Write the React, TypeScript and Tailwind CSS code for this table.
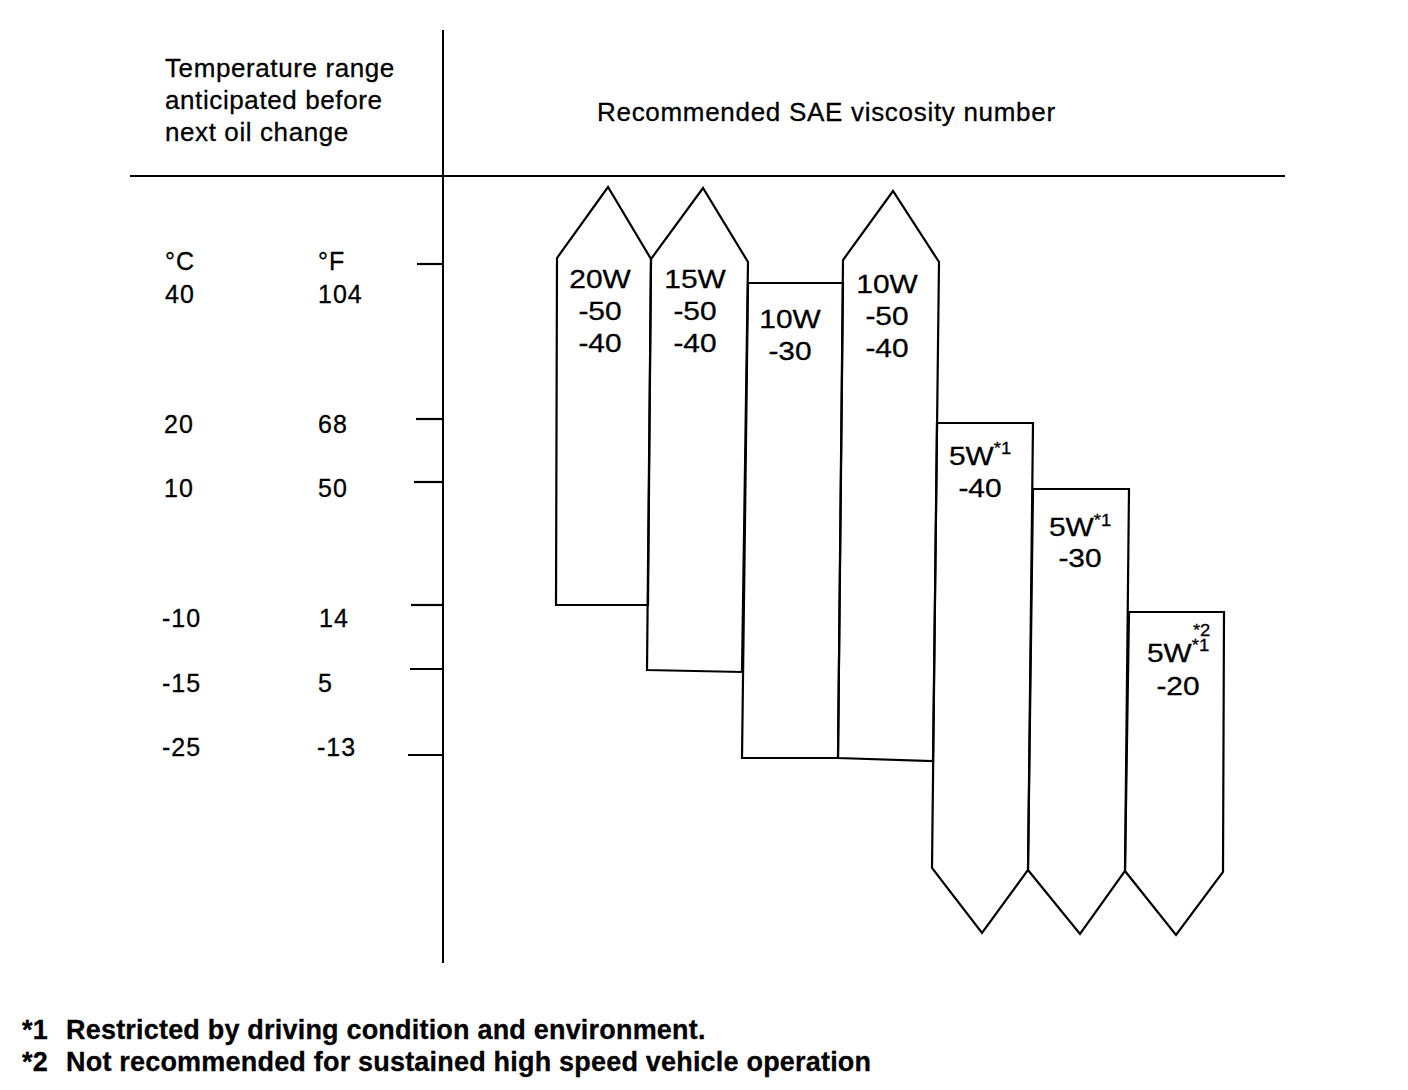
import React from "react";

const font = { fontFamily: '"Liberation Sans", Arial, sans-serif' };

function Sup({ children }: { children: React.ReactNode }) {
  return <span className="relative top-[1px] align-top text-[16px] leading-none">{children}</span>;
}

export default function App() {
  return (
    <div
      className="flex h-[1090px] w-[1408px] flex-col bg-white pt-[30px] text-black [-webkit-text-stroke:0.3px_#000]"
      style={font}
    >
      {/* header row */}
      <div className="ml-[130px] flex h-[147px] shrink-0">
        <div className="w-[314px] border-b-2 border-r-2 border-black pl-[35px] pt-[22px] text-[26px] leading-[32px] tracking-[0.6px]">
          <div>Temperature range</div>
          <div>anticipated before</div>
          <div>next oil change</div>
        </div>
        <div className="w-[841px] border-b-2 border-black pl-[153px] pt-[66px] text-[26px] leading-[32px] tracking-[0.7px]">
          Recommended SAE viscosity number
        </div>
      </div>

      {/* chart body */}
      <div className="ml-[130px] flex h-[786px] shrink-0">
        {/* temperature axis */}
        <div className="relative h-full w-[314px] border-r-2 border-black text-[25px] leading-[32px] tracking-[1px]">
          <svg className="absolute inset-0" width="314" height="786" viewBox="130 177 314 786" fill="none" stroke="#000" strokeWidth="2.2">
            <line x1="417" y1="264" x2="443" y2="264" />
            <line x1="416" y1="419" x2="443" y2="419" />
            <line x1="414" y1="482" x2="443" y2="482" />
            <line x1="411" y1="605" x2="443" y2="605" />
            <line x1="410" y1="669" x2="443" y2="669" />
            <line x1="408" y1="755" x2="443" y2="755" />
          </svg>
          <div className="absolute left-[35px] top-[68px] leading-[33px]">
            <div>°C</div>
            <div>40</div>
          </div>
          <div className="absolute left-[188px] top-[68px] leading-[33px]">
            <div>°F</div>
            <div>104</div>
          </div>
          <div className="absolute left-[34px] top-[231px]">20</div>
          <div className="absolute left-[188px] top-[231px]">68</div>
          <div className="absolute left-[34px] top-[295px]">10</div>
          <div className="absolute left-[188px] top-[295px]">50</div>
          <div className="absolute left-[32px] top-[425px]">-10</div>
          <div className="absolute left-[189px] top-[425px]">14</div>
          <div className="absolute left-[32px] top-[490px]">-15</div>
          <div className="absolute left-[188px] top-[490px]">5</div>
          <div className="absolute left-[32px] top-[554px]">-25</div>
          <div className="absolute left-[187px] top-[554px]">-13</div>
        </div>

        {/* viscosity chart */}
        <div className="relative h-full w-[841px] text-center text-[26px] leading-[32px]">
          <svg className="absolute inset-0" width="841" height="786" viewBox="444 177 841 786" fill="none" stroke="#000" strokeWidth="2.2">
            <polygon points="556,605 557,258 608,187 651,259 648,605" />
            <polygon points="647,670 651,259 703,188 748,262 742,672" />
            <polygon points="742,758 748,283 843,283 838,758" />
            <polygon points="838,758 843,260 893,191 939,262 933,761" />
            <polygon points="937,423 1033,423 1028,870 982,933 932,868" />
            <polygon points="1033,489 1129,489 1125,871 1080,934 1028,870" />
            <polygon points="1129,612 1224,612 1223,872 1176,935 1125,871" />
          </svg>
          <div className="absolute left-[96px] top-[86px] w-[120px] scale-x-[1.15]">
            <div>20W</div>
            <div>-50</div>
            <div>-40</div>
          </div>
          <div className="absolute left-[191px] top-[86px] w-[120px] scale-x-[1.15]">
            <div>15W</div>
            <div>-50</div>
            <div>-40</div>
          </div>
          <div className="absolute left-[286px] top-[126px] w-[120px] scale-x-[1.15]">
            <div>10W</div>
            <div>-30</div>
          </div>
          <div className="absolute left-[383px] top-[91px] w-[120px] scale-x-[1.15]">
            <div>10W</div>
            <div>-50</div>
            <div>-40</div>
          </div>
          <div className="absolute left-[476px] top-[263px] w-[120px] scale-x-[1.15]">
            <div>
              5W<Sup>*1</Sup>
            </div>
            <div>-40</div>
          </div>
          <div className="absolute left-[576px] top-[335px] w-[120px] scale-x-[1.15] leading-[31px]">
            <div>
              5W<Sup>*1</Sup>
            </div>
            <div>-30</div>
          </div>
          <div className="absolute left-[674px] top-[460px] w-[120px] scale-x-[1.15] leading-[33px]">
            <div>
              5W
              <span className="relative top-[1px] inline-block align-top text-[16px] leading-none">
                *1
                <span className="absolute left-[1px] top-[-15px]">*2</span>
              </span>
            </div>
            <div>-20</div>
          </div>
        </div>
      </div>

      {/* footnotes */}
      <div className="mt-[51px] flex flex-col pl-[22px] text-[27px] font-bold leading-[32px] tracking-[0.2px]">
        <div className="flex">
          <span className="w-[44px] shrink-0">*1</span>
          <span>Restricted by driving condition and environment.</span>
        </div>
        <div className="flex">
          <span className="w-[44px] shrink-0">*2</span>
          <span>Not recommended for sustained high speed vehicle operation</span>
        </div>
      </div>
    </div>
  );
}
